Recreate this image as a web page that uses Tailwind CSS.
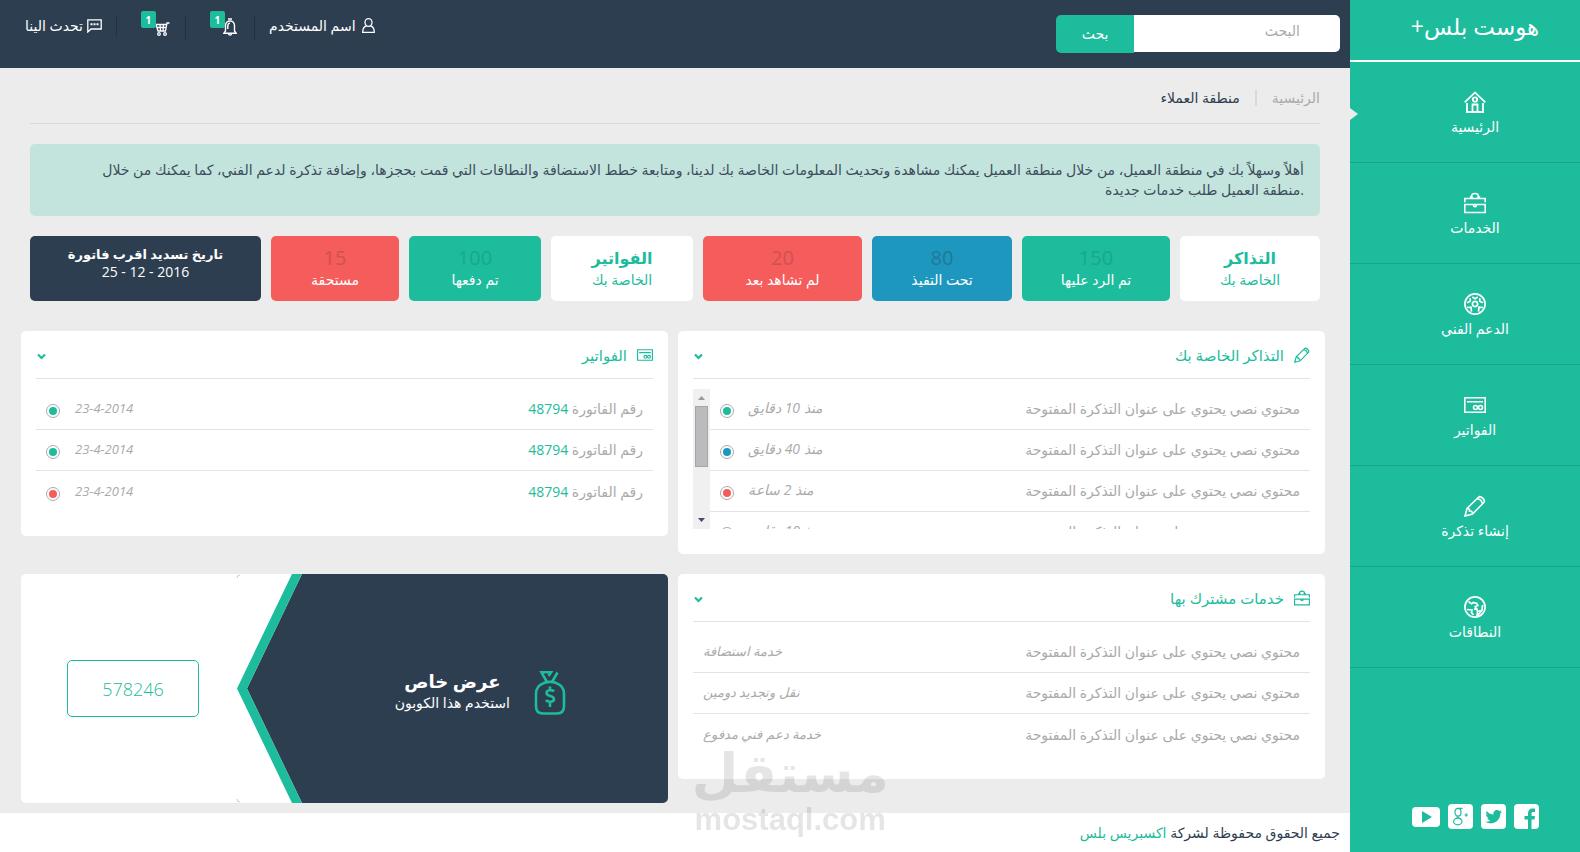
<!DOCTYPE html>
<html lang="ar" dir="rtl">
<head>
<meta charset="utf-8">
<meta name="viewport" content="width=device-width, initial-scale=1">
<title>هوست بلس+</title>
<script src="https://cdn.jsdelivr.net/npm/@tailwindcss/browser@4"></script>
</head>
<body class="bg-[#ececec] font-['Open_Sans','DejaVu_Sans',sans-serif] text-sm leading-5 text-[#2e3e50]">
<svg class="hidden" aria-hidden="true">
  <symbol id="home" viewBox="0 0 22 22"><g fill="none" stroke="currentColor" stroke-width="1.8"><path d="M.7 11.400 11 1.400l10.300 10M3 12v9h16v-9M8.500 21v-7.500h5V21"/><circle cx="11" cy="8.500" r="2.200"/></g></symbol>
  <symbol id="case" viewBox="0 0 22 22"><g fill="none" stroke="currentColor" stroke-width="1.600"><path d="M.8 10.300V6.500h20.400v3.800M.8 12.500h20.400v8H.8zM7.500 6V4.500c0-4 7-4 7 0V6M5.800 5h3M13.200 5h3M9.400 12.500c0 3 3.200 3 3.200 0"/></g></symbol>
  <symbol id="ball" viewBox="0 0 22 22"><g fill="none" stroke="currentColor" stroke-width="1.700"><circle cx="11" cy="11" r="10.100"/><circle cx="11" cy="11" r="2.600"/><path d="m8.300 4 2.700 1.800L13.700 4M15.800 5.200v3l3 1.600M6.200 5.200v3l-3 1.600M3 14.500l4-.3.500 4.500M19 14.500l-4-.3-.5 4.500"/></g></symbol>
  <symbol id="bill" viewBox="0 0 22 22"><g fill="none" stroke="currentColor" stroke-width="1.600"><path d="M.8 3.800h20.400v14.400H.8zM3 7.800h16"/><circle cx="11.500" cy="13.500" r="2"/><circle cx="16.500" cy="13.500" r="2"/></g></symbol>
  <symbol id="pencil" viewBox="0 0 22 22"><g fill="none" stroke="currentColor" stroke-width="1.600"><path d="m1 21 2-7.500L14.500 2.200c2-2 7.500 2.800 5.300 5.300L8.500 19zM3 13.500c2 0 3 .8 2.500 2.500 2-.3 3 .8 3 3M13 3.700c3 .3 5 2.300 5.300 5.300M15.500 1.600c3 .5 4.500 2.500 5 5"/></g></symbol>
  <symbol id="globe" viewBox="0 0 22 22"><g fill="none" stroke="currentColor" stroke-width="1.700"><circle cx="11" cy="11" r="10.100"/><path d="m4.500 5.500 3 2.300 2-1.300 3.300 1 1 2-2.600 1 .8 2-2 1M3 13.500l5 .5-.5 2.500 2 2.500M13.500 15.500l-.5 4.500 5-5.500.5-5.500M12.500 12l1 3.500 3.500-1"/></g></symbol>
  <symbol id="down" viewBox="0 0 9 7"><path d="M1 1.500 4.500 5 8 1.500" fill="none" stroke="currentColor" stroke-width="2.200"/></symbol>
</svg>

<div class="flex min-h-screen">
  <aside class="relative flex w-[230px] shrink-0 flex-col bg-[#1cbc9c] text-white">
    <div class="flex h-[62px] items-center justify-center border-b-2 border-white pb-2 pl-5"><a href="#" class="text-[23px] leading-8">هوست بلس+</a></div>
    <span class="absolute left-0 top-[108px] h-3 w-2 bg-[#ececec] [clip-path:polygon(0_0,100%_50%,0_100%)]"></span>
    <nav class="flex flex-col" aria-label="القائمة">
      <a href="#" class="flex h-[101px] flex-col items-center border-b border-[#17a589] pl-5 pt-[29px]"><svg class="size-[22px]"><use href="#home"/></svg><span class="mt-1">الرئيسية</span></a>
      <a href="#" class="flex h-[101px] flex-col items-center border-b border-[#17a589] pl-5 pt-[29px]"><svg class="size-[22px]"><use href="#case"/></svg><span class="mt-1">الخدمات</span></a>
      <a href="#" class="flex h-[101px] flex-col items-center border-b border-[#17a589] pl-5 pt-[29px]"><svg class="size-[22px]"><use href="#ball"/></svg><span class="mt-1">الدعم الفني</span></a>
      <a href="#" class="flex h-[101px] flex-col items-center border-b border-[#17a589] pl-5 pt-[29px]"><svg class="size-[22px]"><use href="#bill"/></svg><span class="mt-1">الفواتير</span></a>
      <a href="#" class="flex h-[101px] flex-col items-center border-b border-[#17a589] pl-5 pt-[29px]"><svg class="size-[22px]"><use href="#pencil"/></svg><span class="mt-1">إنشاء تذكرة</span></a>
      <a href="#" class="flex h-[101px] flex-col items-center border-b border-[#17a589] pl-5 pt-[29px]"><svg class="size-[22px]"><use href="#globe"/></svg><span class="mt-1">النطاقات</span></a>
    </nav>
    <div class="mt-auto flex items-center justify-center gap-2 pb-[23px] pl-5">
      <a href="#" aria-label="Facebook"><svg class="size-[25px]" viewBox="0 0 25 25"><rect width="25" height="25" rx="4" fill="#fff"/><path d="M14 25v-9.500h-3.500v-3.500H14V9.500C14 6.500 15.500 4.500 18.500 4.500H21v3.500h-2c-1.200 0-1.500.6-1.500 1.700V12H21l-.5 3.500h-3V25z" fill="#1cbc9c"/></svg></a>
      <a href="#" aria-label="Twitter"><svg class="size-[25px]" viewBox="0 0 25 25"><rect width="25" height="25" rx="4" fill="#fff"/><path d="M5.500 7c2 2.200 4 3.400 7 3.500-.6-4 3.500-5.700 5.800-3.500l2.200-.8-1.200 1.900 1.700-.4-1.700 1.800C19.500 17 11.500 22 4.500 17.800c2 .1 3.500-.4 4.800-1.500-1.700-.3-2.700-1.200-3-2.400h1.400C6 13.200 5 12 5 10.300l1.500.4C5 9.500 4.900 8.300 5.500 7z" fill="#1cbc9c"/></svg></a>
      <a href="#" aria-label="Google+"><svg class="size-[25px]" viewBox="0 0 25 25"><rect width="25" height="25" rx="4" fill="#fff"/><g fill="none" stroke="#1cbc9c" stroke-width="1.200"><ellipse cx="10" cy="8.300" rx="3" ry="3.900"/><ellipse cx="9.800" cy="17.500" rx="4.200" ry="3.300"/><path d="M9.500 12.200c-1.500 1.200 2 1.600 3.500 3M10 4.400h4.500M16.500 11h3.500M18.200 9.200v3.600"/></g></svg></a>
      <a href="#" aria-label="YouTube"><svg class="h-[20px] w-[28px]" viewBox="0 0 28 20"><rect width="28" height="20" rx="4" fill="#fff"/><path d="m10 4 10 6-10 6z" fill="#1cbc9c"/></svg></a>
    </div>
  </aside>

  <div class="flex min-w-0 flex-1 flex-col">
    <header class="flex h-[68px] items-start justify-between bg-[#2d3e50] pr-[10px] pt-[15px]">
      <form class="flex" onsubmit="return false">
        <input type="search" aria-label="البحث" placeholder="البحث" class="h-[37px] w-[206px] rounded-r-[5px] bg-white pb-1.5 pr-10 text-[#555] outline-none placeholder:text-[#aaa]">
        <button class="h-[38px] w-[78px] rounded-l-[5px] bg-[#1cbc9c] text-white">بحث</button>
      </form>
      <div class="flex items-start pl-[25px] text-white">
        <a href="#" class="flex h-[21px] items-center gap-1.5 pl-[14px]">
          <svg class="h-[15px] w-[13px]" viewBox="0 0 13 15" fill="none" stroke="currentColor" stroke-width="1.300"><ellipse cx="6.500" cy="4.500" rx="3.500" ry="3.800"/><path d="M4.500 8C2 8.500.7 10 .7 14.300h11.600C12.300 10 11 8.500 8.500 8"/></svg>اسم المستخدم</a>
        <a href="#" aria-label="التنبيهات" class="relative h-[25px] w-[69px] border-r border-[#223140]"><svg class="absolute left-[37px] top-[3px] h-[18px] w-[14px]" viewBox="0 0 14 18" fill="none" stroke="currentColor" stroke-width="1.400"><path d="M2.500 13V7.500c0-6 9-6 9 0V13l1.700 2.300H.8zM4.800 11V8c0-2 1-2.800 2.200-2.900M5 1h4M5.500 15.500c0 2.200 3 2.200 3 0"/></svg><span class="absolute -top-1 left-[24px] flex h-[17px] w-[15px] items-center justify-center rounded-xs bg-[#1cbc9c] text-[10px] font-bold">1</span></a>
        <a href="#" aria-label="السلة" class="relative h-[25px] w-[69px] border-r border-[#223140]"><svg class="absolute left-[38px] top-[7px] h-[14px] w-[15px]" viewBox="0 0 15 14" fill="none" stroke="currentColor" stroke-width="1.300"><path d="M14.500 1H12l-1.500 8H3L1 2.500h10.500M2 5.500h9M5 2.500l.5 6M8.500 2.500 8 8.500"/><circle cx="4" cy="12" r="1.300"/><circle cx="10" cy="12" r="1.300"/></svg><span class="absolute -top-1 left-[24px] flex h-[17px] w-[15px] items-center justify-center rounded-xs bg-[#1cbc9c] text-[10px] font-bold">1</span></a>
        <a href="#" class="flex h-[21px] items-center gap-1 border-r border-[#223140] pr-[14px]"><svg class="h-[14px] w-[15px]" viewBox="0 0 15 14" fill="none" stroke="currentColor" stroke-width="1.300"><path d="M.8.8h13.400v9.200H4L.8 13z"/><path d="M3.500 5.300h8" stroke-width="2" stroke-dasharray="2 1"/></svg>تحدث الينا</a>
      </div>
    </header>

    <main class="flex-1 px-[25px] pb-[10px] pl-[21px]">
      <div class="mr-[5px] ml-[9px]">
        <nav aria-label="المسار" class="flex h-[56px] items-center border-b border-[#d8d8d8] pb-1 pt-2"><a href="#" class="text-[#aaa]">الرئيسية</a><span class="mx-[15px] h-4 w-0.5 bg-[#dadada]"></span><span>منطقة العملاء</span></nav>
        <p dir="ltr" class="mt-5 min-h-[72px] rounded-[5px] bg-[#c3e4dc] p-4 text-right text-[#3c4c5c]">أهلاً وسهلاً بك في منطقة العميل، من خلال منطقة العميل يمكنك مشاهدة وتحديث المعلومات الخاصة بك لدينا، ومتابعة خطط الاستضافة والنطاقات التي قمت بحجزها، وإضافة تذكرة لدعم الفني، كما يمكنك من خلال<br>منطقة العميل طلب خدمات جديدة.</p>
        <section class="mt-5 grid grid-cols-[140fr_148fr_140fr_159fr_142fr_132fr_128fr_231fr] gap-[10px] text-center text-white *:h-[65px] *:rounded-[5px] *:pt-[10px]">
          <div class="bg-white text-[#1cbc9c]"><h2 class="text-base leading-6 font-bold">التذاكر</h2><p>الخاصة بك</p></div>
          <div class="bg-[#1cbc9c]"><p class="text-xl leading-6 text-[#19a88c]">150</p><p>تم الرد عليها</p></div>
          <div class="bg-[#1e97be]"><p class="text-xl leading-6 text-[#1e7996]">80</p><p>تحت التفيذ</p></div>
          <div class="bg-[#f55c5c]"><p class="text-xl leading-6 text-[#d05152]">20</p><p>لم تشاهد بعد</p></div>
          <div class="bg-white text-[#1cbc9c]"><h2 class="text-base leading-6 font-bold">الفواتير</h2><p>الخاصة بك</p></div>
          <div class="bg-[#1cbc9c]"><p class="text-xl leading-6 text-[#19a88c]">100</p><p>تم دفعها</p></div>
          <div class="bg-[#f55c5c]"><p class="text-xl leading-6 text-[#d05152]">15</p><p>مستحقة</p></div>
          <div class="bg-[#2d3e50]"><h2 class="text-[13px] leading-4 font-bold">تاريخ تسديد اقرب فاتورة</h2><p dir="ltr">25 - 12 - 2016</p></div>
        </section>
      </div>

      <div class="mt-[30px] grid grid-cols-2 items-start gap-x-[10px] gap-y-5 text-[#aaa]">
        <section class="h-[223px] rounded-[5px] bg-white px-[15px]">
          <div class="flex h-[48px] items-center border-b border-[#e3e3e3] text-[#1cbc9c]"><svg class="size-4"><use href="#pencil"/></svg><h2 class="mr-[10px] text-[15px]">التذاكر الخاصة بك</h2><button aria-label="طي" class="mr-auto px-px pt-1"><svg class="h-[7px] w-[9px]"><use href="#down"/></svg></button></div>
          <div class="mt-[10px] flex h-[140px] overflow-hidden">
            <ul class="flex-1 *:flex *:h-[41px] *:items-center *:border-b *:border-[#e3e3e3] *:px-[10px]">
              <li><span>محتوي نصي يحتوي على عنوان التذكرة المفتوحة</span><span dir="ltr" class="mr-auto flex items-center gap-[14px]"><i class="mt-1 size-[14px] rounded-full border border-[#aaa] bg-[#1cbc9c] bg-clip-content p-0.5"></i><em dir="rtl" class="pb-0.5">منذ 10 دقايق</em></span></li>
              <li><span>محتوي نصي يحتوي على عنوان التذكرة المفتوحة</span><span dir="ltr" class="mr-auto flex items-center gap-[14px]"><i class="mt-1 size-[14px] rounded-full border border-[#aaa] bg-[#1e97be] bg-clip-content p-0.5"></i><em dir="rtl" class="pb-0.5">منذ 40 دقايق</em></span></li>
              <li><span>محتوي نصي يحتوي على عنوان التذكرة المفتوحة</span><span dir="ltr" class="mr-auto flex items-center gap-[14px]"><i class="mt-1 size-[14px] rounded-full border border-[#aaa] bg-[#f55c5c] bg-clip-content p-0.5"></i><em dir="rtl" class="pb-0.5">منذ 2 ساعة</em></span></li>
              <li><span>محتوي نصي يحتوي على عنوان التذكرة المفتوحة</span><span dir="ltr" class="mr-auto flex items-center gap-[14px]"><i class="mt-1 size-[14px] rounded-full border border-[#aaa] bg-[#1cbc9c] bg-clip-content p-0.5"></i><em dir="rtl" class="pb-0.5">منذ 10 دقايق</em></span></li>
            </ul>
            <div class="flex w-[17px] flex-col items-center justify-between bg-[#f0f0f0] py-[7px]" aria-hidden="true">
              <div class="flex flex-col items-center gap-[6px]"><span class="h-1 w-[7px] bg-[#999] [clip-path:polygon(50%_0,100%_100%,0_100%)]"></span><span class="h-[61px] w-[13px] border border-[#a5a5a7] bg-[#bcbabc]"></span></div>
              <span class="h-1 w-[7px] bg-[#3f4f5f] [clip-path:polygon(0_0,100%_0,50%_100%)]"></span>
            </div>
          </div>
        </section>

        <section class="h-[205px] rounded-[5px] bg-white px-[15px]">
          <div class="flex h-[48px] items-center border-b border-[#e3e3e3] text-[#1cbc9c]"><svg class="size-4"><use href="#bill"/></svg><h2 class="mr-[10px] text-[15px]">الفواتير</h2><button aria-label="طي" class="mr-auto px-px pt-1"><svg class="h-[7px] w-[9px]"><use href="#down"/></svg></button></div>
          <ul class="mt-[10px] *:flex *:h-[41px] *:items-center *:border-[#e3e3e3] *:px-[10px] *:not-last:border-b">
            <li><span>رقم الفاتورة <a href="#" class="text-[#1cbc9c]">48794</a></span><span dir="ltr" class="mr-auto flex items-center gap-[15px]"><i class="mt-1 size-[14px] rounded-full border border-[#aaa] bg-[#1cbc9c] bg-clip-content p-0.5"></i><em class="pb-0.5 text-[13px]">23-4-2014</em></span></li>
            <li><span>رقم الفاتورة <a href="#" class="text-[#1cbc9c]">48794</a></span><span dir="ltr" class="mr-auto flex items-center gap-[15px]"><i class="mt-1 size-[14px] rounded-full border border-[#aaa] bg-[#1cbc9c] bg-clip-content p-0.5"></i><em class="pb-0.5 text-[13px]">23-4-2014</em></span></li>
            <li><span>رقم الفاتورة <a href="#" class="text-[#1cbc9c]">48794</a></span><span dir="ltr" class="mr-auto flex items-center gap-[15px]"><i class="mt-1 size-[14px] rounded-full border border-[#aaa] bg-[#f55c5c] bg-clip-content p-0.5"></i><em class="pb-0.5 text-[13px]">23-4-2014</em></span></li>
          </ul>
        </section>

        <section class="h-[205px] rounded-[5px] bg-white px-[15px]">
          <div class="flex h-[48px] items-center border-b border-[#e3e3e3] text-[#1cbc9c]"><svg class="size-4"><use href="#case"/></svg><h2 class="mr-[10px] text-[15px]">خدمات مشترك بها</h2><button aria-label="طي" class="mr-auto px-px pt-1"><svg class="h-[7px] w-[9px]"><use href="#down"/></svg></button></div>
          <ul class="mt-[10px] *:flex *:h-[41px] *:items-center *:justify-between *:border-[#e3e3e3] *:px-[10px] *:not-last:border-b">
            <li><span>محتوي نصي يحتوي على عنوان التذكرة المفتوحة</span><em class="pb-0.5 text-[13px]">خدمة استضافة</em></li>
            <li><span>محتوي نصي يحتوي على عنوان التذكرة المفتوحة</span><em class="pb-0.5 text-[13px]">نقل وتجديد دومين</em></li>
            <li><span>محتوي نصي يحتوي على عنوان التذكرة المفتوحة</span><em class="pb-0.5 text-[13px]">خدمة دعم فني مدفوع</em></li>
          </ul>
        </section>

        <section class="flex h-[229px] overflow-hidden rounded-[5px] bg-white">
          <div class="flex flex-1 items-center bg-[#2d3e50] pr-[102px] pt-1 text-white">
            <svg class="mt-1 h-[44px] w-[32px] text-[#1cbc9c]" viewBox="0 0 32 44" fill="none" stroke="currentColor" stroke-width="2.600"><path d="M10 12C4 14 2 18 2 23v12c0 5 2.500 7.500 7 7.500h14c4.500 0 7-2.500 7-7.500V23c0-5-2-9-8-11M10 12c3-1.500 9-1.500 12 0M13 11 7.500 1.300h9.500L14.500 5M18 11l5.500-9.500"/><path d="M20 20.500c-1.500-2-7.500-2-7.500 1.500 0 3.800 7.500 2 7.500 6 0 3.500-6.500 3.500-8 1M16 15.500v3M16 32v4"/></svg>
            <div class="mr-6 text-center"><h2 class="text-lg leading-6 font-bold">عرض خاص</h2><p>استخدم هذا الكوبون</p></div>
          </div>
          <svg class="h-full w-[66px] shrink-0" viewBox="0 0 66 229" aria-hidden="true"><path d="M66 0v229L11 114.500z" fill="#2d3e50"/><path d="M56 0h10L11 114.500 66 229H56L1 114.500z" fill="#1cbc9c"/><path d="M1 4q0-3 3-3M1 225q0 3 3 3" fill="none" stroke="#ccc"/></svg>
          <div class="flex w-[215px] items-center justify-center pl-[9px]"><span class="flex h-[57px] w-[132px] items-center justify-center rounded-[5px] border border-[#1cbc9c] text-lg font-light text-[#1cbc9c]">578246</span></div>
        </section>
      </div>
    </main>
    <footer class="flex h-[39px] items-center bg-white px-[10px]"><p>جميع الحقوق محفوظة لشركة <a href="#" class="text-[#1cbc9c]">اكسبريس بلس</a></p></footer>
  </div>
</div>

<div class="pointer-events-none fixed bottom-4 left-[44%] flex w-[190px] flex-col items-center text-black opacity-10">
  <span class="text-[54px] leading-[66px] font-bold">مستقل</span>
  <span class="font-['Liberation_Sans',sans-serif] text-[31px] leading-8 font-bold" dir="ltr">mostaql.com</span>
</div>
</body>
</html>
